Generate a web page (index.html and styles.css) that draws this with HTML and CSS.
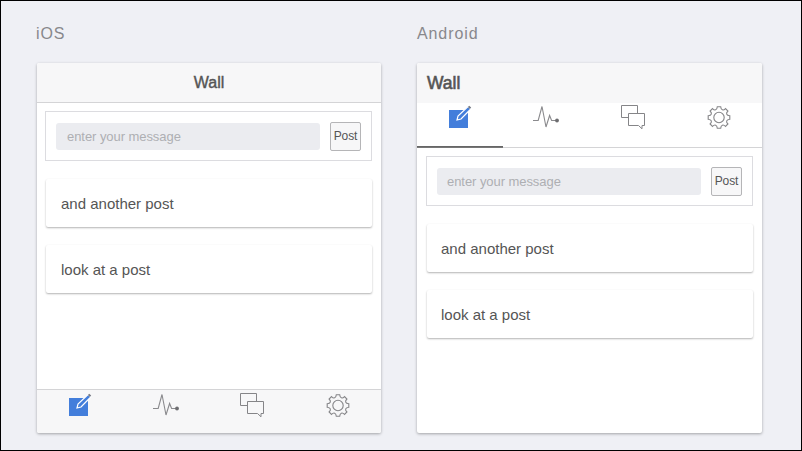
FILE: index.html
```
<!DOCTYPE html>
<html lang="en">
<head>
<meta charset="utf-8">
<title>Wall</title>
<link rel="stylesheet" href="styles.css">
</head>
<body>
<svg width="0" height="0" class="sprite" aria-hidden="true">
  <symbol id="edit" viewBox="0 0 28 28">
    <path d="M3 7h19v18H3z" fill="#437edb"/>
    <path d="M11 17l1-4L22 3.500l2.800 2.500L15 16z" fill="#437edb" stroke="#fff" stroke-width="1.200"/>
    <path d="M22.600 3.400l1.900 1.900" stroke="#777b86" stroke-width="2"/>
  </symbol>
  <symbol id="pulse" viewBox="0 0 28 28">
    <path d="M1 17.500h5.200L10 3.500l4 20.500 3.600-11.500 2 5H25" fill="none" stroke="#8a8a8d" stroke-width="1.100"/>
    <circle cx="25" cy="17.500" r="1.900" fill="#6d6d70"/>
  </symbol>
  <symbol id="chat" viewBox="0 0 28 28">
    <path d="M9.500 14.500H2.500v-12h16v7.500M9.500 10.500h16v12h-2.500v3.300l-3.500-3.300h-10z" fill="none" stroke="#858588"/>
  </symbol>
  <symbol id="gear" viewBox="0 0 28 28">
    <g fill="none" stroke="#858588" stroke-width="1.100">
      <circle cx="14" cy="14.500" r="5.200"/>
      <path d="M12.300 3.700h3.400c.3 3.500 2.500 4.200 4.800 1.900l2.400 2.400c-2.300 2.300-1.600 4.500 1.900 4.800v3.400c-3.500.3-4.200 2.500-1.900 4.800l-2.400 2.400c-2.300-2.300-4.500-1.600-4.800 1.900h-3.400c-.3-3.500-2.500-4.200-4.800-1.900L5.100 21c2.300-2.300 1.600-4.500-1.900-4.800v-3.400c3.500-.3 4.200-2.500 1.900-4.800l2.400-2.400c2.300 2.300 4.500 1.600 4.800-1.900z"/>
    </g>
  </symbol>
</svg>
<main class="stage">
  <section class="device ios">
    <h2 class="platform">iOS</h2>
    <div class="screen">
      <header class="bar"><span class="title">Wall</span></header>
      <div class="content">
        <form class="composer"><input class="message" placeholder="enter your message"><button type="button" class="post">Post</button></form>
        <article class="card"><span>and another post</span></article>
        <article class="card"><span>look at a post</span></article>
      </div>
      <nav class="tabs">
        <a class="tab active"><svg><use href="#edit"/></svg></a>
        <a class="tab"><svg><use href="#pulse"/></svg></a>
        <a class="tab"><svg><use href="#chat"/></svg></a>
        <a class="tab"><svg><use href="#gear"/></svg></a>
      </nav>
    </div>
  </section>
  <section class="device android">
    <h2 class="platform">Android</h2>
    <div class="screen">
      <header class="bar"><span class="title">Wall</span></header>
      <nav class="tabs">
        <a class="tab active"><svg><use href="#edit"/></svg></a>
        <a class="tab"><svg><use href="#pulse"/></svg></a>
        <a class="tab"><svg><use href="#chat"/></svg></a>
        <a class="tab"><svg><use href="#gear"/></svg></a>
      </nav>
      <div class="content">
        <form class="composer"><input class="message" placeholder="enter your message"><button type="button" class="post">Post</button></form>
        <article class="card"><span>and another post</span></article>
        <article class="card"><span>look at a post</span></article>
      </div>
    </div>
  </section>
</main>
</body>
</html>
```
FILE: styles.css
```
* { box-sizing: border-box; }
body {
  margin: 0;
  font-family: "Liberation Sans", Arial, sans-serif;
  color: #555;
}
.sprite { display: none; }
.stage {
  display: flex;
  gap: 36px;
  width: 802px;
  height: 451px;
  padding: 22px 0 0 36px;
  overflow: hidden;
  border: 1px solid #000;
  background: #eff0f5;
}
.device { width: 344px; }
.android { width: 345px; }
.platform {
  height: 40px;
  margin: 0;
  font-size: 16px;
  line-height: 21px;
  font-weight: 400;
  letter-spacing: 0.9px;
  color: #88888c;
}
.ios .platform { margin-left: -1px; }
.screen {
  display: flex;
  flex-direction: column;
  height: 370px;
  border-radius: 2px;
  background: #fff;
  box-shadow: 0 1px 3px rgba(0, 0, 0, 0.32);
}
.bar {
  display: flex;
  align-items: center;
  justify-content: center;
  height: 40px;
  border-radius: 2px 2px 0 0;
  background: #f7f7f8;
}
.ios .bar { border-bottom: 1px solid #d4d4d6; }
.android .bar { justify-content: flex-start; padding-left: 10px; }
.title {
  font-size: 16px;
  line-height: 20px;
  -webkit-text-stroke: 0.4px #555;
}
.android .title { font-size: 17.5px; -webkit-text-stroke-width: 0.6px; }
.content { flex: 1; padding: 8px 9px 0 8px; }
.android .content { padding: 8px 9px 0; }
.composer {
  display: flex;
  align-items: center;
  justify-content: space-between;
  height: 50px;
  margin-bottom: 18px;
  padding: 0 10px;
  border: 1px solid #dcdce0;
}
.message {
  width: 264px;
  height: 27px;
  padding: 1px 10px 0 11px;
  border: 0;
  border-radius: 3px;
  background: #ebecf0;
  font: 13px "Liberation Sans", Arial, sans-serif;
  letter-spacing: -0.06px;
}
.message::placeholder { color: #aeafb3; opacity: 1; }
.android .message { padding-left: 10px; }
.post {
  width: 31px;
  height: 29px;
  padding: 0;
  border: 1px solid #b5b5b7;
  border-radius: 2px;
  background: #f7f7f8;
  color: #555;
  font: 12px "Liberation Sans", Arial, sans-serif;
  letter-spacing: -0.1px;
}
.card {
  display: flex;
  align-items: center;
  height: 48px;
  margin: 0 0 18px 1px;
  padding-left: 15px;
  border-radius: 2px;
  background: #fff;
  box-shadow: 0 1px 2px rgba(0, 0, 0, 0.3);
  font-size: 15px;
}
.android .card { padding-left: 14px; }
.tabs {
  display: flex;
  height: 45px;
}
.ios .tabs {
  height: 44px;
  border-top: 1px solid #d4d4d6;
  border-radius: 0 0 2px 2px;
  background: #f7f7f8;
}
.android .tabs { border-bottom: 1px solid #d4d4d6; }
.tab {
  display: flex;
  flex: 1;
  justify-content: center;
}
.ios .tab { padding-top: 1px; }
.tab svg { width: 28px; height: 28px; }
.android .active { box-shadow: inset 0 -1px #666, 0 1px #777; }
```
